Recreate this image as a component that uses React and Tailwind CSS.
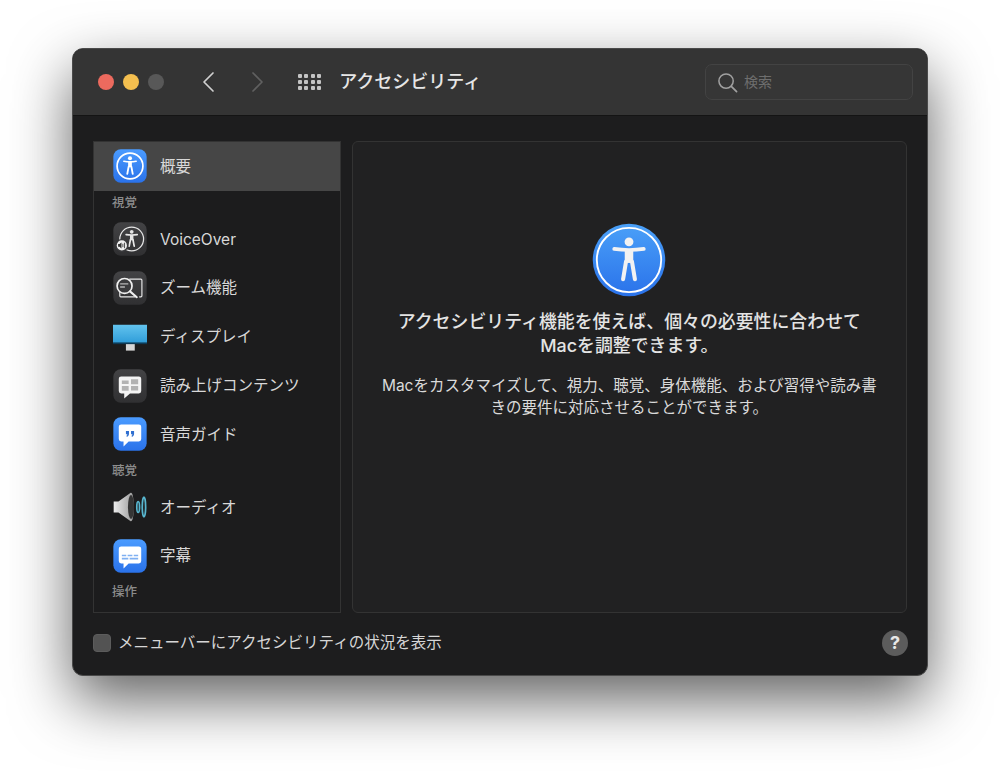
const FONT = "font-['Inter','Noto_Sans_CJK_JP',sans-serif]";

function Figure({ color = "#fff", ring = true, ringWidth = 5 }) {
  return (
    <g>
      {ring && <circle cx="50" cy="50" r="38" fill="none" stroke={color} strokeWidth={ringWidth} />}
      <circle cx="50" cy="27" r="6" fill={color} />
      <path d="M32 36 Q50 39 68 36" fill="none" stroke={color} strokeWidth="5" strokeLinecap="round" />
      <path d="M50 37 L50 54" stroke={color} strokeWidth="11" />
      <path d="M46 52 L42 73 M54 52 L58 73" stroke={color} strokeWidth="5.5" strokeLinecap="round" />
    </g>
  );
}

function IconBox({ children, gid, blue }) {
  return (
    <svg viewBox="0 0 100 100" className="w-[34px] h-[34px] shrink-0">
      <defs>
        <linearGradient id={gid} x1="0" y1="0" x2="0" y2="1">
          <stop offset="0" stopColor={blue ? "#4a9bff" : "#434345"} />
          <stop offset="1" stopColor={blue ? "#2a72ea" : "#303032"} />
        </linearGradient>
      </defs>
      <rect x="1" y="1" width="98" height="98" rx="22" fill={`url(#${gid})`} />
      {children}
    </svg>
  );
}

const Overview = () => (
  <IconBox gid="g-ov" blue>
    <Figure ringWidth={5} />
  </IconBox>
);
const VoiceOverIcon = () => (
  <IconBox gid="g-vo">
    <g transform="translate(9 4) scale(0.92)"><Figure color="#e6e6e6" ringWidth={4} /></g>
    <circle cx="26" cy="69" r="19" fill="#3a3a3c" />
    <circle cx="26" cy="69" r="15" fill="#f0f0f0" />
    <path d="M15 65h4l6-5v18l-6-5h-4z" fill="#333" />
    <path d="M29 64v10M34 61v16" stroke="#333" strokeWidth="2.5" />
  </IconBox>
);
const ZoomIcon = () => (
  <IconBox gid="g-zm">
    <path d="M48 24h34a3 3 0 0 1 3 3v46a3 3 0 0 1-3 3h-5M20 62v11a3 3 0 0 0 3 3h43" fill="none" stroke="#e6e6e6" strokeWidth="3.5" />
    <circle cx="34" cy="44" r="22" fill="#3a3a3c" stroke="#f0f0f0" strokeWidth="5" />
    <path d="M21 38h24M21 47h14" stroke="#b5b5b5" strokeWidth="4" />
    <path d="M50 60l20 17" stroke="#f0f0f0" strokeWidth="6" strokeLinecap="round" />
  </IconBox>
);
const DisplayIcon = () => (
  <svg viewBox="0 0 100 100" className="w-[34px] h-[34px] shrink-0">
    <defs>
      <linearGradient id="g-d" x1="0" y1="0" x2="0" y2="1">
        <stop offset="0" stopColor="#62c3ee" />
        <stop offset="1" stopColor="#2d9bd8" />
      </linearGradient>
    </defs>
    <rect x="38" y="66" width="26" height="24" fill="#d6d6d6" />
    <rect x="0" y="14" width="100" height="56" fill="url(#g-d)" />
    <rect x="0" y="66" width="100" height="5" fill="#0e3a55" />
  </svg>
);
const SpeechIcon = () => (
  <IconBox gid="g-sp">
    <path d="M24 22h52a7 7 0 0 1 7 7v36a7 7 0 0 1-7 7H50L33 87V72h-9a7 7 0 0 1-7-7V29a7 7 0 0 1 7-7z" fill="#f4f4f4" />
    <path d="M26 34h20v10H26zM53 30h21v15H53zM26 50h20v14H26zM53 50h21v13H53z" fill="#9c9c9c" opacity="0.75" />
  </IconBox>
);
const GuideIcon = () => (
  <IconBox gid="g-gd" blue>
    <path d="M24 22h52a7 7 0 0 1 7 7v36a7 7 0 0 1-7 7H46L31 87V72h-7a7 7 0 0 1-7-7V29a7 7 0 0 1 7-7z" fill="#fff" />
    <path d="M38 41h9v8c0 5-3 8-6 9l-2-2c2-1 3-3 3-5h-4zM53 41h9v8c0 5-3 8-6 9l-2-2c2-1 3-3 3-5h-4z" fill="#2f6fd0" />
  </IconBox>
);
const AudioIcon = () => (
  <svg viewBox="0 0 100 100" className="w-[36px] h-[34px] shrink-0 -ml-[1px] -mr-[1px]">
    <defs>
      <linearGradient id="g-a" x1="0" y1="0" x2="1" y2="0">
        <stop offset="0" stopColor="#ececec" />
        <stop offset="1" stopColor="#9a9a9a" />
      </linearGradient>
    </defs>
    <path d="M2 34h14l36-26c6-2 9 16 9 42s-3 44-9 42L16 66H2z" fill="url(#g-a)" />
    <ellipse cx="53" cy="50" rx="9" ry="35" fill="#353535" />
    <ellipse cx="74" cy="50" rx="4" ry="16" fill="none" stroke="#58b6cf" strokeWidth="5" />
    <ellipse cx="91" cy="50" rx="5" ry="29" fill="none" stroke="#58b6cf" strokeWidth="5" />
  </svg>
);
const CaptionIcon = () => (
  <IconBox gid="g-cp" blue>
    <path d="M24 22h52a7 7 0 0 1 7 7v36a7 7 0 0 1-7 7H46L31 87V72h-7a7 7 0 0 1-7-7V29a7 7 0 0 1 7-7z" fill="#fff" />
    <path d="M26 46h13v5H26zM43 46h14v5H43zM61 46h13v5H61zM26 55h19v5H26zM49 55h25v5H49z" fill="#7fb0f2" />
  </IconBox>
);

function Row({ icon, label, selected }) {
  return (
    <div className={`flex items-center h-[48.75px] pl-[19px] gap-[13px] ${selected ? "bg-[#464646]" : ""}`}>
      {icon}
      <span className="text-[15.5px] text-[#d8d8d8] leading-none">{label}</span>
    </div>
  );
}

function Header({ label }) {
  return (
    <div className="h-[24.25px] pl-[18px] flex items-center text-[12.5px] font-medium text-[#8c8c8c] leading-none">{label}</div>
  );
}

export default function App() {
  return (
    <div className={`w-[1000px] h-[771px] bg-white pt-[48px] pl-[72px] overflow-hidden ${FONT}`}>
      <div className="w-[856px] h-[628px] rounded-[11px] bg-[#1d1d1e] flex flex-col overflow-hidden border border-[#4a4a4a] shadow-[0_24px_60px_rgba(0,0,0,0.62)]">
        <div className="h-[67px] shrink-0 bg-[#343434] border-b border-[#141414] flex items-center pl-[25px] pr-[14px]">
          <div className="flex gap-[9px]">
            <span className="w-[16px] h-[16px] rounded-full bg-[#ec6a5e]" />
            <span className="w-[16px] h-[16px] rounded-full bg-[#f4bf4f]" />
            <span className="w-[16px] h-[16px] rounded-full bg-[#585858]" />
          </div>
          <svg viewBox="0 0 14 22" className="w-[14px] h-[22px] ml-[37px]">
            <path d="M12 2 L3 11 L12 20" fill="none" stroke="#d0d0d0" strokeWidth="1.7" strokeLinecap="round" strokeLinejoin="round" />
          </svg>
          <svg viewBox="0 0 14 22" className="w-[14px] h-[22px] ml-[36px]">
            <path d="M2 2 L11 11 L2 20" fill="none" stroke="#606060" strokeWidth="1.7" strokeLinecap="round" strokeLinejoin="round" />
          </svg>
          <div className="ml-[33px] grid grid-cols-4 gap-[2.4px]">
            {Array.from({ length: 12 }).map((_, i) => (
              <span key={i} className="w-[4px] h-[4px] rounded-[1px] bg-[#c4c4c4]" />
            ))}
          </div>
          <span className="ml-[18px] text-[18px] font-medium text-[#e6e6e6] leading-none">アクセシビリティ</span>
          <div className="ml-auto w-[208px] h-[36px] rounded-[7px] border border-[#434343] bg-[#363636] flex items-center pl-[11px] gap-[6px]">
            <svg viewBox="0 0 22 22" className="w-[21px] h-[21px]">
              <circle cx="9.5" cy="9.5" r="7.5" fill="none" stroke="#a0a0a0" strokeWidth="1.6" />
              <path d="M15 15 L20.5 20.5" stroke="#a0a0a0" strokeWidth="1.8" strokeLinecap="round" />
            </svg>
            <span className="text-[14px] text-[#6e6e6e] leading-none">検索</span>
          </div>
        </div>

        <div className="flex-1 flex flex-col">
          <div className="flex gap-[11px] pt-[25px] pl-[20px] pr-[20px] h-[497px]">
            <div className="w-[248px] h-[472px] bg-[#1c1c1d] border border-[#333333] overflow-hidden">
              <Row selected icon={<Overview />} label="概要" />
              <Header label="視覚" />
              <Row icon={<VoiceOverIcon />} label="VoiceOver" />
              <Row icon={<ZoomIcon />} label="ズーム機能" />
              <Row icon={<DisplayIcon />} label="ディスプレイ" />
              <Row icon={<SpeechIcon />} label="読み上げコンテンツ" />
              <Row icon={<GuideIcon />} label="音声ガイド" />
              <Header label="聴覚" />
              <Row icon={<AudioIcon />} label="オーディオ" />
              <Row icon={<CaptionIcon />} label="字幕" />
              <Header label="操作" />
            </div>
            <div className="w-[556px] h-[472px] rounded-[6px] bg-[#212122] border border-[#333333] flex flex-col items-center pt-[81px]">
              <svg viewBox="0 0 100 100" className="w-[74px] h-[74px]">
                <defs>
                  <linearGradient id="g-big" x1="0" y1="0" x2="0" y2="1">
                    <stop offset="0" stopColor="#4aa0f8" />
                    <stop offset="1" stopColor="#2a72ea" />
                  </linearGradient>
                </defs>
                <circle cx="50" cy="50" r="49" fill="url(#g-big)" />
                <circle cx="50" cy="50" r="43.5" fill="none" stroke="#fff" strokeWidth="2.5" />
                <circle cx="50" cy="25.5" r="6" fill="#f2f2f2" />
                <path d="M30 35 Q50 38 70 35" fill="none" stroke="#f2f2f2" strokeWidth="5" strokeLinecap="round" />
                <path d="M50 36 L50 54" stroke="#f2f2f2" strokeWidth="11.5" />
                <path d="M46 52 L42 76 M54 52 L58 76" stroke="#f2f2f2" strokeWidth="5.5" strokeLinecap="round" />
              </svg>
              <p className="mt-[13px] text-[17.9px] leading-[24px] font-medium text-[#e4e4e4] text-center">
                アクセシビリティ機能を使えば、個々の必要性に合わせて<br />Macを調整できます。
              </p>
              <p className="mt-[17px] w-[500px] text-[15.5px] leading-[22px] text-[#dadada] text-center">
                Macをカスタマイズして、視力、聴覚、身体機能、および習得や読み書きの要件に対応させることができます。
              </p>
            </div>
          </div>
          <div className="flex items-center pl-[20px] pr-[19px] pb-[5px] h-[64px]">
            <span className="w-[18px] h-[18px] rounded-[4px] bg-[#535353] border border-[#5c5c5c]" />
            <span className="ml-[7px] text-[15.5px] text-[#d6d6d6] leading-none">メニューバーにアクセシビリティの状況を表示</span>
            <span className="ml-auto w-[26px] h-[26px] rounded-full bg-[#5c5c5c] flex items-center justify-center text-[18px] font-bold text-[#e8e8e8] leading-none">?</span>
          </div>
        </div>
      </div>
    </div>
  );
}
